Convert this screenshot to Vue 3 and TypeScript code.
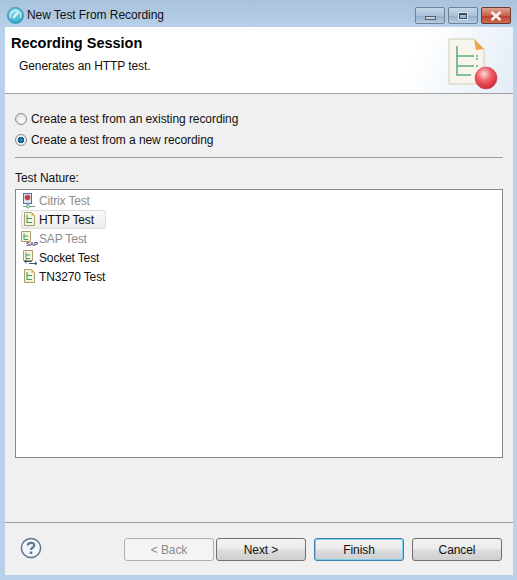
<template>
  <div class="window">
    <div class="titlebar">
      <svg class="app-icon" width="17" height="17" viewBox="0 0 17 17">
        <defs>
          <radialGradient id="orb" cx="0.45" cy="0.35" r="0.75">
            <stop offset="0" stop-color="#8fe0ee" />
            <stop offset="1" stop-color="#1f9cc2" />
          </radialGradient>
        </defs>
        <circle cx="8.5" cy="8.5" r="8" fill="url(#orb)" stroke="#2a8fad" stroke-width="0.8" />
        <path d="M3.6 11 A5.4 5.4 0 1 1 13.4 11" fill="none" stroke="#eefbfd" stroke-width="1.2" />
        <path d="M6.3 11 L11 5.5" stroke="#fff" stroke-width="1.4" />
      </svg>
      <span class="title">New Test From Recording</span>
      <div class="controls">
        <div class="ctl min"><span class="min-glyph"></span></div>
        <div class="ctl max"><span class="max-glyph"></span></div>
        <div class="ctl close">
          <svg width="14" height="10" viewBox="0 0 14 10">
            <path d="M2.5 1 L11.5 9 M11.5 1 L2.5 9" stroke="#f4f1ee" stroke-width="2.6" />
          </svg>
        </div>
      </div>
    </div>

    <div class="dialog">
      <header class="banner">
        <div class="banner-text">
          <h1>Recording Session</h1>
          <p>Generates an HTTP test.</p>
        </div>
        <svg class="banner-icon" width="52" height="52" viewBox="0 0 52 52">
          <defs>
            <radialGradient id="ball" cx="0.42" cy="0.32" r="0.7">
              <stop offset="0" stop-color="#fbdcdc" />
              <stop offset="0.45" stop-color="#f0606a" />
              <stop offset="1" stop-color="#cf2431" />
            </radialGradient>
          </defs>
          <path d="M2 1 H27 L37 11 V46 H2 Z" fill="#f7f5ec" stroke="#cfcdbb" />
          <path d="M27 1 L37 11 L29 12 Z" fill="#eda34a" />
          <path d="M10 8 V37 H24 M10 18 H27 M10 28 H27" fill="none" stroke="#5fb07f" stroke-width="1.6" />
          <path d="M29 18 H31 M29 21 H31 M29 28 H31" stroke="#5fb07f" stroke-width="1.4" />
          <circle cx="39" cy="40" r="11" fill="url(#ball)" stroke="#c3505a" stroke-width="0.6" />
        </svg>
      </header>

      <main class="body">
        <label class="radio">
          <span class="dot"></span>
          Create a test from an existing recording
        </label>
        <label class="radio">
          <span class="dot on"></span>
          Create a test from a new recording
        </label>
        <div class="rule"></div>
        <div class="nature-label">Test Nature:</div>
        <ul class="nature-list">
          <li
            v-for="item in natures"
            :key="item.name"
            class="nature"
            :class="{ disabled: item.disabled, selected: item.selected }"
          >
            <svg class="nature-icon" width="18" height="19" viewBox="0 0 18 19">
              <template v-if="item.kind === 'citrix'">
                <rect x="2.5" y="2.5" width="8" height="10" fill="#dbe2f0" stroke="#5a6ea8" />
                <circle cx="6.5" cy="6.5" r="2.8" fill="#c4433f" />
                <path d="M6.5 12.5 V15 M2 15.5 H14" stroke="#6aa07d" stroke-width="1.1" />
                <circle cx="7" cy="15.5" r="1.6" fill="#bfe0c8" stroke="#5f9a74" stroke-width="0.7" />
              </template>
              <template v-else-if="item.kind === 'sap'">
                <path d="M0.5 2.5 H9.5 V12.5 H0.5 Z" fill="#f7f3da" stroke="#a99f6d" />
                <path d="M3 4.5 V10.5 M3 7 H7 M3 10.5 H7" fill="none" stroke="#3d9c62" />
                <text x="5" y="17" class="sap">SAP</text>
              </template>
              <template v-else-if="item.kind === 'socket'">
                <path d="M2.5 2.5 H11.5 V12.5 H2.5 Z" fill="#f7f3da" stroke="#a99f6d" />
                <path d="M5 4.5 V10.5 M5 7 H9 M5 10.5 H9" fill="none" stroke="#3d9c62" />
                <path
                  d="M3.5 13.5 H11 M5.5 11.8 L3.5 13.5 L5.5 15.2 M14 13.8 L16 15.5 L14 17 M8 15.5 H16"
                  fill="none"
                  stroke="#2b3f66"
                  stroke-width="0.9"
                />
              </template>
              <template v-else>
                <path d="M3.5 2.5 H10.5 L13.5 5.5 V15.5 H3.5 Z" fill="#f7f3da" stroke="#a99f6d" />
                <path d="M10.5 2.5 L13.5 5.5 H10.5 Z" fill="#e4a44c" />
                <path d="M6 5 V13 M6 8.5 H11 M6 12.5 H11" fill="none" stroke="#3d9c62" stroke-width="1.1" />
              </template>
            </svg>
            <span>{{ item.name }}</span>
          </li>
        </ul>
      </main>

      <footer class="footer">
        <svg class="help" width="22" height="22" viewBox="0 0 22 22">
          <circle cx="11" cy="11" r="9.6" fill="#f4f6f9" stroke="#5c7896" stroke-width="1.5" />
          <path d="M7.8 8.6 C7.8 4.9 14.3 4.9 14.3 8.4 C14.3 10.6 11 10.5 11 13" fill="none" stroke="#5c7896" stroke-width="2.2" />
          <rect x="9.8" y="14.5" width="2.5" height="2.5" fill="#5c7896" />
        </svg>
        <div class="buttons">
          <button class="btn" disabled>&lt; Back</button>
          <button class="btn">Next &gt;</button>
          <button class="btn default">Finish</button>
          <button class="btn">Cancel</button>
        </div>
      </footer>
    </div>
  </div>
</template>

<script setup lang="ts">
interface Nature {
  name: string;
  kind: "citrix" | "http" | "sap" | "socket";
  disabled?: boolean;
  selected?: boolean;
}

const natures: Nature[] = [
  { name: "Citrix Test", kind: "citrix", disabled: true },
  { name: "HTTP Test", kind: "http", selected: true },
  { name: "SAP Test", kind: "sap", disabled: true },
  { name: "Socket Test", kind: "socket" },
  { name: "TN3270 Test", kind: "http" },
];
</script>

<style>
html,
body {
  margin: 0;
  background: #b9d1ea;
}
</style>

<style scoped>
.window {
  width: 517px;
  height: 580px;
  box-sizing: border-box;
  display: flex;
  flex-direction: column;
  padding: 0 4px 5px 5px;
  background: linear-gradient(180deg, #a9c3dc 0, #b9d1ea 30px);
  font-family: "Liberation Sans", Arial, sans-serif;
  font-size: 12px;
  letter-spacing: -0.07px;
  color: #111;
}

.titlebar {
  height: 27px;
  flex: none;
  display: flex;
  align-items: center;
  gap: 3px;
  padding: 3px 0 0 2px;
  box-sizing: border-box;
}

.controls {
  margin-left: auto;
  margin-right: 2px;
  align-self: flex-start;
  margin-top: 4px;
  display: flex;
  gap: 3px;
}

.ctl {
  height: 17px;
  width: 30px;
  box-sizing: border-box;
  border: 1px solid #6f8296;
  border-radius: 2px;
  display: flex;
  align-items: center;
  justify-content: center;
  background: linear-gradient(180deg, #c6d8ea 0, #a9c1da 50%, #93aecb 52%, #b4cbe2 100%);
}

.ctl.close {
  border-color: #6d3a32;
  background: linear-gradient(180deg, #dfa193 0, #c9604c 50%, #b8412e 52%, #cf6b52 100%);
}

.min-glyph {
  width: 9px;
  height: 2px;
  margin-top: 4px;
  background: #c9d2da;
  border: 1px solid #4d5d6c;
}

.max-glyph {
  width: 6px;
  height: 3px;
  border: 1px solid #3e4c5a;
  border-top-width: 2px;
  outline: 1px solid #dfe7ee;
}

.dialog {
  flex: 1;
  min-height: 0;
  display: flex;
  flex-direction: column;
  background: #f0f0f0;
}

.banner {
  height: 67px;
  flex: none;
  box-sizing: border-box;
  display: flex;
  justify-content: space-between;
  background: linear-gradient(115deg, #fff 78%, #e3edf6 100%);
  border-bottom: 1px solid #a0a0a0;
  padding: 7px 14px 0 6px;
}

.banner h1 {
  margin: 0;
  font-size: 14.5px;
  font-weight: 700;
  line-height: 18px;
  letter-spacing: 0;
  color: #000;
}

.banner p {
  margin: 6px 0 0 8px;
  line-height: 16px;
}

.banner-icon {
  margin-top: 4px;
}

.body {
  flex: 1;
  min-height: 0;
  display: flex;
  flex-direction: column;
  padding: 14px 10px 0;
}

.radio {
  display: flex;
  align-items: center;
  gap: 4px;
  height: 21px;
}

.dot {
  width: 10px;
  height: 10px;
  border-radius: 50%;
  border: 1px solid #8d8d8d;
  background: radial-gradient(circle at 60% 65%, #fff 0, #e6e6e6 55%, #cfcfcf 100%);
}

.dot.on {
  background: radial-gradient(circle, #2f9bd8 0, #0d4f86 42%, #f2f2f2 46%, #dcdcdc 100%);
}

.rule {
  height: 1px;
  flex: none;
  margin-top: 7px;
  background: #a0a0a0;
}

.nature-label {
  margin-top: 12px;
  line-height: 16px;
}

.nature-list {
  list-style: none;
  margin: 3px 0 0;
  padding: 1px 0 0 5px;
  height: 269px;
  box-sizing: border-box;
  flex: none;
  background: #fff;
  border: 1px solid #828790;
}

.nature {
  display: flex;
  align-items: center;
  height: 19px;
  width: fit-content;
  letter-spacing: -0.15px;
}

.nature > span {
  margin-top: 2px;
  padding-right: 12px;
  line-height: 17px;
}

.nature.selected {
  background: linear-gradient(180deg, #fafafa 0, #ececec 100%);
  border-radius: 3px;
  box-shadow: inset 0 0 0 1px #dcdcdc;
}

.nature.disabled {
  color: #8c8c8c;
}

.nature-icon {
  flex: none;
}

.sap {
  font-size: 6px;
  font-weight: 700;
  fill: #1d4f91;
}

.footer {
  height: 53px;
  flex: none;
  box-sizing: border-box;
  margin-top: auto;
  border-top: 1px solid #a0a0a0;
  display: flex;
  align-items: flex-start;
  justify-content: space-between;
  padding: 15px 11px 0 15px;
}

.help {
  margin-top: -1px;
}

.buttons {
  display: flex;
  gap: 2px;
}

.btn {
  width: 90px;
  height: 23px;
  box-sizing: border-box;
  padding: 0;
  font: inherit;
  letter-spacing: inherit;
  color: #111;
  border: 1px solid #707070;
  border-radius: 3px;
  background: linear-gradient(180deg, #f2f2f2 0, #ebebeb 48%, #dddddd 52%, #cfcfcf 100%);
}

.btn:disabled {
  color: #8a8a8a;
  border-color: #adb2b5;
  background: #f4f4f4;
}

.btn.default {
  margin-left: 6px;
  margin-right: 6px;
  border-color: #3c7fb1;
  box-shadow: inset 0 0 0 1px #7fd0ee;
}
</style>
